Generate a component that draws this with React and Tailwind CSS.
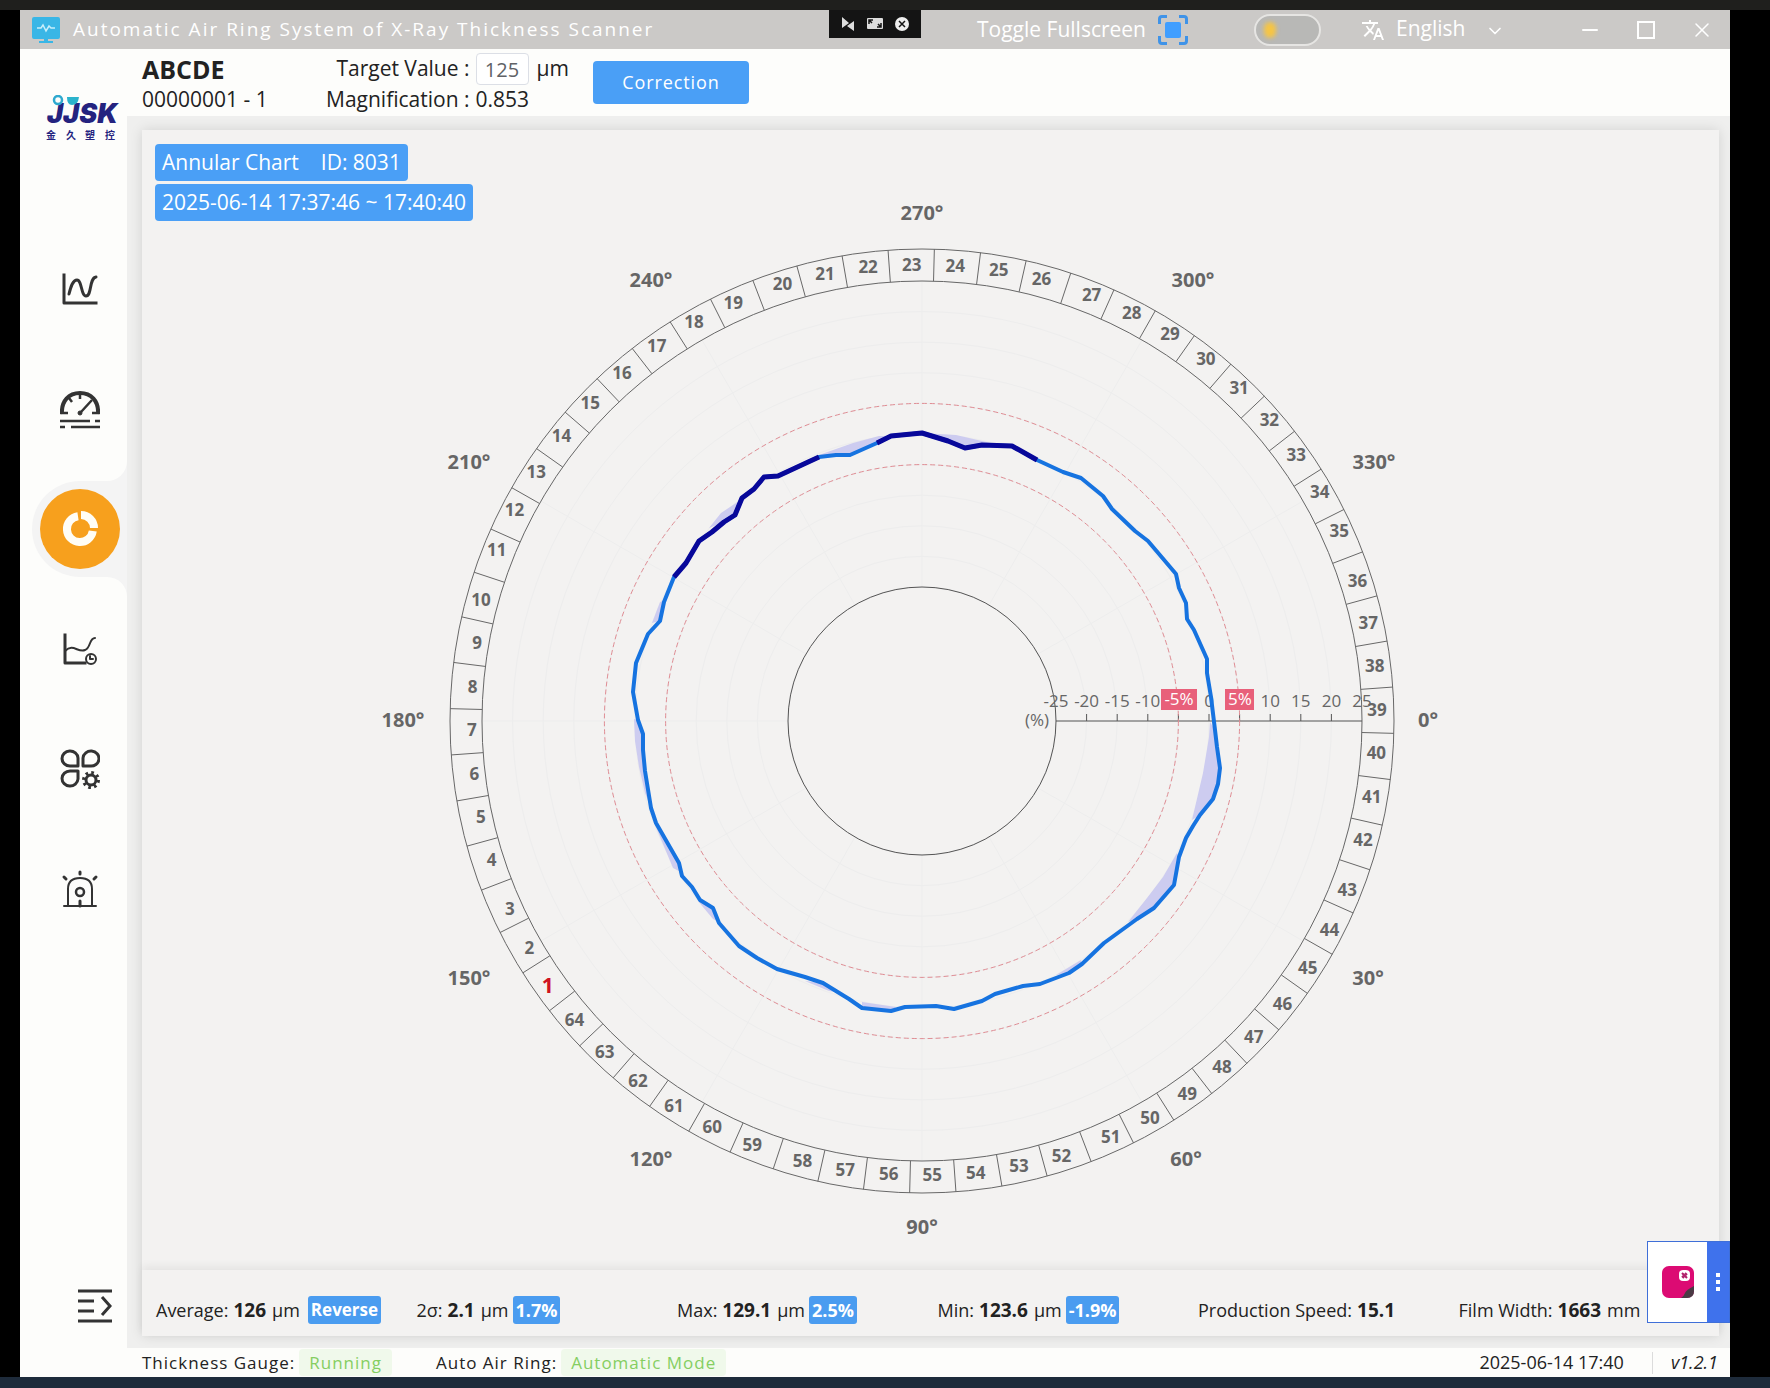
import { useState } from "react";
import { ChevronDown, Minus, Square, X } from "lucide-react";
import { MdTranslate } from "react-icons/md";

// points are relative to the chart centre, clockwise from 180°
const profile = [
  [-284, -1], [-289, -29], [-286, -58], [-274, -87], [-262, -100], [-258, -119], [-248, -144],
  [-236, -158], [-223, -180], [-210, -189], [-198, -199], [-187, -206], [-180, -223], [-168, -232],
  [-158, -244], [-144, -245], [-116, -258], [-103, -264],
  [-86, -266], [-72, -266], [-45, -278],
  [-31, -285], [0, -288], [26, -280], [43, -273], [60, -276], [90, -275], [115, -261],
  [141, -249], [159, -243], [181, -225], [190, -212], [213, -190], [226, -180], [254, -147],
  [257, -133], [264, -118], [265, -102], [272, -91], [285, -62], [285, -48], [289, -24],
  [293, 9], [295, 26], [298, 47], [296, 63], [291, 78], [278, 94], [271, 105], [264, 117],
  [257, 136], [252, 164], [232, 187], [215, 198], [182, 222], [160, 243], [147, 252], [118, 263],
  [101, 265], [73, 273], [60, 280], [32, 288], [14, 285], [-17, 286], [-31, 290], [-60, 287],
  [-73, 278], [-99, 262], [-117, 256], [-145, 248], [-165, 237], [-183, 225], [-203, 202],
  [-209, 187], [-222, 179], [-230, 166], [-240, 155], [-243, 142], [-266, 102], [-271, 87],
  [-277, 50], [-279, 29], [-279, 13],
];

// stretches of the profile where the ring is correcting
const activeRanges = [[6, 17], [20, 27]];

const deviations = [
  "288,1 287,16 281,52 270,99 278,94 291,78 296,63 298,47 295,26 293,9",
  "255,132 241,156 225,177 206,201 215,198 232,187 252,164 257,136",
  "-103,-266 -69,-278 -43,-285 -31,-285 -45,-278 -72,-266 -86,-266",
  "0,-288 34,-286 60,-280 78,-276 60,-276 43,-273 26,-280",
  "-213,-193 -201,-208 -183,-220 -187,-206 -198,-199",
  "-270,-98 -262,-119 -257,-121 -262,-100",
  "-288,-2 -287,20 -283,46 -277,72 -271,87 -277,50 -279,13 -284,-1",
  "-267,104 -249,147 -243,150 -243,142 -266,102",
  "-224,180 -209,198 -205,200 -209,187",
  "-117,260 -93,270 -80,272 -99,262",
  "-60,281 -26,286 -31,290 -60,287",
  "134,254 159,239 160,243 147,252",
  "252,-147 258,-130 259,-128 257,-140",
];

const angles = [
  { label: "0°", x: 506, y: -2 },
  { label: "30°", x: 446, y: 256 },
  { label: "60°", x: 264, y: 437 },
  { label: "90°", x: 0, y: 505 },
  { label: "120°", x: -271, y: 437 },
  { label: "150°", x: -453, y: 256 },
  { label: "180°", x: -519, y: -2 },
  { label: "210°", x: -453, y: -260 },
  { label: "240°", x: -271, y: -442 },
  { label: "270°", x: 0, y: -509 },
  { label: "300°", x: 271, y: -442 },
  { label: "330°", x: 452, y: -260 },
];

const INNER = 134;
const RING_IN = 440;
const RING_OUT = 472;
const STEP = (RING_IN - INNER) / 10;

// the zone number sits one sample further after each of these zones
const wideZones = [3, 10, 19, 26, 35, 42, 51, 58];

const polar = (deg, r) => {
  const a = (deg * Math.PI) / 180;
  return [r * Math.cos(a), r * Math.sin(a)];
};

const zoneAngle = (zone) =>
  144.67 + (zone - 1) * 5.488 + wideZones.filter((z) => z < zone).length * 1.098;

// numbers move outwards a little on the diagonals, single digits sit right of centre
const zonePosition = (zone) => {
  const deg = zoneAngle(zone);
  const r = 455 + 4 * Math.abs(Math.sin((deg * Math.PI) / 90));
  const [x, y] = polar(deg, r);
  return [zone > 1 && zone < 10 ? x + 5 : x, y];
};

const toPoints = (list) => list.map((p) => p.join(",")).join(" ");

function AnnularChart() {
  const zones = Array.from({ length: 64 }, (_, i) => i + 1);
  const ticks = Array.from({ length: 11 }, (_, i) => (i - 5) * 5);

  return (
    <svg viewBox="-780 -591 1577 1140" className="w-full h-full" role="img" aria-label="Annular chart">
      {/* Grid */}
      <g fill="none" stroke="#ededed">
        {ticks.map((t, i) => (
          <circle key={t} r={INNER + STEP * i} />
        ))}
        {angles.map((a, i) => {
          const [x1, y1] = polar(i * 30, INNER);
          const [x2, y2] = polar(i * 30, RING_IN);
          return <line key={a.label} x1={x1} y1={y1} x2={x2} y2={y2} />;
        })}
      </g>

      {/* Ring */}
      <g fill="none" stroke="#686868">
        <circle r={INNER} stroke="#555555" />
        <circle r={RING_IN} />
        <circle r={RING_OUT} />
        {zones.map((z) => {
          const [x1, y1] = polar(1.5 + z * 5.625, RING_IN);
          const [x2, y2] = polar(1.5 + z * 5.625, RING_OUT);
          return <line key={z} x1={x1} y1={y1} x2={x2} y2={y2} />;
        })}
      </g>

      {/* Zone numbers */}
      <g textAnchor="middle" className="text-[17px] font-bold fill-[#666666]">
        {zones.map((z) => {
          const [x, y] = zonePosition(z);
          return z === 1 ? (
            <text key={z} x={x} y={y + 7} className="text-[21px] fill-[#cf1322]">
              {z}
            </text>
          ) : (
            <text key={z} x={x} y={y + 5}>
              {z}
            </text>
          );
        })}
      </g>

      {/* Angles */}
      <g textAnchor="middle" className="text-[20px] font-bold fill-[#666666]">
        {angles.map((a) => (
          <text key={a.label} x={a.x} y={a.y + 8}>
            {a.label}
          </text>
        ))}
      </g>

      {/* Radial axis */}
      <g stroke="#555555">
        <line x1={INNER} y1="0" x2={RING_IN} y2="0" />
        {ticks.slice(1, 10).map((t, i) => (
          <line key={t} x1={INNER + STEP * (i + 1)} y1="0" x2={INNER + STEP * (i + 1)} y2="-7" />
        ))}
      </g>
      <g textAnchor="middle" className="text-[17px] fill-[#666666]">
        <text x="115" y="5">(%)</text>
        {ticks.map((t, i) =>
          Math.abs(t) === 5 ? null : (
            <text key={t} x={INNER + STEP * i} y="-14">
              {t}
            </text>
          )
        )}
      </g>

      {/* Limits */}
      <g fill="none" stroke="#e08d94" strokeDasharray="5 3">
        <circle r={INNER + STEP * 4} />
        <circle r={INNER + STEP * 6} />
      </g>
      <g textAnchor="middle" className="text-[17px] fill-white">
        <rect x="239" y="-32" width="36" height="21" fill="#e8607a" />
        <text x="257" y="-16">-5%</text>
        <rect x="303" y="-32" width="29" height="21" fill="#e8607a" />
        <text x="318" y="-16">5%</text>
      </g>

      {/* Thickness */}
      <g fill="#cdccf0">
        {deviations.map((d) => (
          <polygon key={d} points={d} />
        ))}
      </g>
      <polygon points={toPoints(profile)} fill="none" stroke="#1673e0" strokeWidth="4" strokeLinejoin="round" />
      {activeRanges.map(([from, to]) => (
        <polyline
          key={from}
          points={toPoints(profile.slice(from, to + 1))}
          fill="none"
          stroke="#08089a"
          strokeWidth="5"
          strokeLinejoin="round"
        />
      ))}
    </svg>
  );
}

function Logo() {
  return (
    <svg viewBox="0 0 76 48" className="w-[76px] h-12 ml-6">
      <g fill="#24237f">
        <text x="3" y="28" className="text-[27px] font-black italic font-['Inter',sans-serif]">JJSK</text>
        <text x="2 22 41 61" y="44" className="text-[10px] font-bold font-['Noto_Sans_CJK_SC',sans-serif]">金久塑控</text>
      </g>
      <circle cx="14" cy="5" r="4" fill="#fdfdfb" stroke="#2fa9cf" strokeWidth="2.5" />
      <path d="M23 2h12q-1 8-7 8-5 0-5-8z" fill="#2bb3cc" />
    </svg>
  );
}

const line = { fill: "none", stroke: "#333333", strokeWidth: 2.5, strokeLinecap: "round", strokeLinejoin: "round" };

function CurveIcon() {
  return (
    <svg viewBox="0 0 40 40" className="w-10 h-10" {...line} strokeWidth="3">
      <path d="M4 6v28h32" strokeLinecap="square" />
      <path d="M9 25c2-8 4-14 8-14 5 0 4 16 9 16 6 0 3-18 10-19" />
    </svg>
  );
}

function GaugeIcon() {
  return (
    <svg viewBox="0 0 40 40" className="w-10 h-10" {...line} strokeLinecap="butt">
      <path d="M2 25C1 12 9 4 20 4s19 8 18 21" strokeWidth="4" />
      <path d="M1 24h7M32 24h7M20 4v6M9 9l3 4M21 23 32 11" />
      <circle cx="20" cy="24" r="2" fill="#333333" strokeWidth="1" />
      <path d="M0 32h30M35 32h5M0 38h5M11 38h29" />
    </svg>
  );
}

function DonutIcon() {
  return (
    <svg viewBox="0 0 40 40" className="w-10 h-10" fill="none" stroke="#fffdf5" strokeWidth="8">
      <path d="M18 7.200A13 13 0 1 0 32.800 22" />
      <path d="M21 6A13 13 0 0 1 34 19" />
    </svg>
  );
}

function HistoryIcon() {
  return (
    <svg viewBox="0 0 40 40" className="w-10 h-10" {...line} strokeWidth="2">
      <path d="M5 6v28h20" strokeWidth="3" strokeLinecap="square" />
      <path d="M5 22c8-8 13 2 20-1 6-2 4-12 10-12" />
      <circle cx="31" cy="30" r="5" />
      <path d="M30 27v3h3" />
    </svg>
  );
}

function ModulesIcon() {
  return (
    <svg viewBox="0 0 40 40" className="w-10 h-10" {...line} strokeWidth="3">
      <path d="M18 17H10a8 7.500 0 1 1 8-8z" />
      <path d="M23 17h7a8 7.500 0 1 0-7-8z" />
      <path d="M18 22H10a8 7.500 0 1 0 8 8z" />
      <circle cx="31" cy="31" r="5" />
      <circle cx="31" cy="31" r="7" strokeWidth="4" strokeDasharray="2.500 3" strokeLinecap="butt" />
    </svg>
  );
}

function AlarmIcon() {
  return (
    <svg viewBox="0 0 40 40" className="w-10 h-10" {...line}>
      <path d="M8 37V20q0-11 12-11t12 11v17M4 37h32" strokeWidth="2" />
      <circle cx="20" cy="23" r="4" />
      <path d="M20 32v5M20 3v2M4 8l2 2M36 8l-2 2" strokeWidth="3" />
    </svg>
  );
}

const menu = [
  { name: "Curve", icon: <CurveIcon /> },
  { name: "Gauge", icon: <GaugeIcon /> },
  { name: "Annular chart", icon: <DonutIcon />, active: true },
  { name: "History", icon: <HistoryIcon /> },
  { name: "Modules", icon: <ModulesIcon /> },
  { name: "Alarms", icon: <AlarmIcon /> },
];

function Sidebar() {
  return (
    <aside className="w-[107px] shrink-0 bg-[#fdfdfb] flex flex-col">
      <div className="pt-[46px]">
        <Logo />
      </div>
      <nav className="mt-[86px] flex flex-col">
        {menu.map((item) => (
          <div key={item.name} className="h-[120px] flex flex-col justify-center">
            {item.active ? (
              <div className="relative h-24 ml-3 rounded-l-full bg-[#f4f4f4] flex items-center pl-1">
                <div className="absolute right-0 -top-5 w-5 h-5 bg-[#f4f4f4]">
                  <div className="w-full h-full bg-[#fdfdfb] rounded-br-[20px]" />
                </div>
                <div className="absolute right-0 -bottom-5 w-5 h-5 bg-[#f4f4f4]">
                  <div className="w-full h-full bg-[#fdfdfb] rounded-tr-[20px]" />
                </div>
                <button
                  aria-label={item.name}
                  className="w-20 h-20 ml-1 rounded-full bg-[#f7a01d] flex items-center justify-center"
                >
                  {item.icon}
                </button>
              </div>
            ) : (
              <button aria-label={item.name} className="w-20 h-20 ml-5 flex items-center justify-center">
                {item.icon}
              </button>
            )}
          </div>
        ))}
      </nav>
      <button aria-label="Expand menu" className="mt-auto mb-[54px] ml-[58px] w-[34px]">
        <svg viewBox="0 0 34 34" className="w-full" fill="none" stroke="#333333" strokeWidth="3">
          <path d="M0 2h34M0 12h16M0 22h16M0 32h34M24 8l8 9-8 9" />
        </svg>
      </button>
    </aside>
  );
}

function TitleBar() {
  const [dark, setDark] = useState(false);
  const [language, setLanguage] = useState("en");

  return (
    <header className="relative h-[39px] shrink-0 bg-[#cbc9c7] text-white flex items-center pl-3 pr-4">
      <svg viewBox="0 0 28 26" className="w-7 h-[26px] shrink-0">
        <path d="M2 0h24q2 0 2 2v18q0 2-2 2H2q-2 0-2-2V2q0-2 2-2zM12 22h4v2h5v2H7v-2h5z" fill="#39b6e6" />
        <path d="M5 11h4l2-3 3 6 3-5 2 2h4" fill="none" stroke="#c8eefa" strokeWidth="1.500" />
      </svg>
      <h1 className="ml-[13px] text-[19px] tracking-[2px] whitespace-nowrap">
        Automatic Air Ring System of X-Ray Thickness Scanner
      </h1>

      <div className="ml-auto flex items-center whitespace-nowrap">
        <button className="flex items-center gap-3 text-[21px]">
          Toggle Fullscreen
          <svg viewBox="0 0 30 30" className="w-[30px] h-[30px]" fill="none" stroke="#3f93e8" strokeWidth="3">
            <path d="M1.500 9V4q0-2.500 2.500-2.500h5M21 1.500h5q2.500 0 2.500 2.500v5M28.500 21v5q0 2.500-2.500 2.500h-5M9 28.500H4q-2.500 0-2.500-2.500v-5" />
            <rect x="7" y="7" width="16" height="16" rx="2" fill="#409eff" stroke="none" />
          </svg>
        </button>
        <label className="ml-[66px] w-[67px] h-8 rounded-full border-2 border-[#e6e5e3] bg-[#b8b8b6] flex items-center px-2">
          <input
            type="checkbox"
            aria-label="Dark theme"
            className="sr-only"
            checked={dark}
            onChange={(e) => setDark(e.target.checked)}
          />
          <span className="w-3 h-4 rounded-full bg-[#f6c544] blur-[2px]" />
        </label>
        <MdTranslate className="ml-10 text-[24px]" />
        <div className="relative ml-2">
          <select
            aria-label="Language"
            value={language}
            onChange={(e) => setLanguage(e.target.value)}
            className="appearance-none bg-transparent text-[21px] leading-[26px] w-[112px] pb-1 pl-[3px]"
          >
            <option value="en">English</option>
          </select>
          <ChevronDown className="absolute right-0 top-[6px] w-5 h-5 pointer-events-none" />
        </div>
        <button aria-label="Minimize" className="ml-[73px]">
          <Minus className="w-6 h-6" strokeWidth={2} />
        </button>
        <button aria-label="Maximize" className="ml-8">
          <svg viewBox="0 0 24 18" className="w-6 h-[18px]" fill="none" stroke="currentColor" strokeWidth="2">
            <rect x="4" y="1" width="16" height="16" />
          </svg>
        </button>
        <button aria-label="Close" className="ml-8">
          <X className="w-6 h-6" strokeWidth={1.5} />
        </button>
      </div>

      {/* Remote session toolbar */}
      <div className="absolute left-[809px] top-0 w-[92px] h-7 bg-[#141414] flex items-center justify-center gap-3">
        <button aria-label="Pin">
          <svg viewBox="0 0 14 14" className="w-[14px] h-[14px]" fill="#dddddd">
            <path d="M1 0l7 6-7 5zM13 4v10L6 9z" />
          </svg>
        </button>
        <button aria-label="Resize">
          <svg viewBox="0 0 16 12" className="w-4 h-3">
            <rect width="16" height="11" rx="1" fill="#dddddd" />
            <path d="M2 6V2h4M2 2l3 3M14 5v4h-4M14 9l-3-3" stroke="#141414" strokeWidth="1.500" fill="none" />
          </svg>
        </button>
        <button aria-label="End session">
          <svg viewBox="0 0 14 14" className="w-[14px] h-[14px]">
            <circle cx="7" cy="7" r="7" fill="#eeeeee" />
            <path d="M4 4l6 6M10 4l-6 6" stroke="#141414" strokeWidth="1.500" />
          </svg>
        </button>
      </div>
    </header>
  );
}

function Stat({ label, value, unit, badge, action }) {
  return (
    <div className="flex items-center whitespace-nowrap">
      <span>{label}:</span>
      <span className="ml-[5px] text-[19px] font-bold">{value}</span>
      {unit && <span className="ml-[6px]">{unit}</span>}
      {badge && (
        <span className="ml-1 px-[3px] rounded-[3px] bg-[#4a9cf0] text-white font-bold leading-7">{badge}</span>
      )}
      {action && (
        <button className="ml-2 px-[3px] rounded-[3px] bg-[#4a9cf0] text-white text-[17px] font-bold leading-7">
          {action}
        </button>
      )}
    </div>
  );
}

export default function App() {
  const [target, setTarget] = useState("125");

  return (
    <div className="min-h-screen bg-black flex flex-col font-['Open_Sans','Noto_Sans',sans-serif] text-[#222222]">
      <div className="h-[10px] bg-[#1f1f1d]" />

      <div className="relative flex-1 flex flex-col ml-5 mr-10 bg-[#efefee]">
        <TitleBar />

        <div className="flex-1 flex">
          <Sidebar />

          <div className="flex-1 flex flex-col min-w-0">
            {/* Header */}
            <div className="h-[67px] bg-[#fdfdfb] flex items-start pl-[15px]">
              <div className="w-[184px] pt-1">
                <p className="text-[25px] leading-8 font-bold">ABCDE</p>
                <p className="text-[21px] leading-7">00000001 - 1</p>
              </div>
              <div className="pt-1 grid grid-cols-[auto_auto] gap-x-[6px] text-[21px] whitespace-nowrap">
                <label htmlFor="target" className="text-right leading-[30px]">Target Value :</label>
                <div className="flex items-center gap-2">
                  <input
                    id="target"
                    value={target}
                    onChange={(e) => setTarget(e.target.value)}
                    className="w-[53px] h-8 rounded border border-[#dcdfe6] bg-white text-center text-[20px] text-[#606266]"
                  />
                  <span>μm</span>
                </div>
                <span className="text-right leading-7">Magnification :</span>
                <span className="leading-7">0.853</span>
              </div>
              <button className="ml-6 mt-3 w-[156px] h-[43px] rounded bg-[#4a9ff6] text-white text-[18px] tracking-wider">
                Correction
              </button>
            </div>

            {/* Card */}
            <main className="flex-1 flex flex-col mt-[14px] mb-3 ml-[15px] mr-[11px] bg-[#f3f2f1] shadow-[0_0_12px_rgba(0,0,0,0.12)]">
              <div className="relative flex-1">
                <AnnularChart />
                <div className="absolute left-[13px] top-[14px] flex flex-col items-start gap-[3px] text-[21px] leading-[37px] text-white">
                  <p className="px-[7px] rounded bg-[#4a9ff6] flex gap-[22px]">
                    <span>Annular Chart</span>
                    <span>ID: 8031</span>
                  </p>
                  <p className="px-[7px] rounded bg-[#4a9ff6]">2025-06-14 17:37:46 ~ 17:40:40</p>
                </div>
              </div>
              <div className="h-[66px] pl-[14px] pt-[14px] grid grid-cols-6 items-center text-[18px] shadow-[0_-4px_8px_rgba(0,0,0,0.06)]">
                <Stat label="Average" value="126" unit="μm" action="Reverse" />
                <Stat label="2σ" value="2.1" unit="μm" badge="1.7%" />
                <Stat label="Max" value="129.1" unit="μm" badge="2.5%" />
                <Stat label="Min" value="123.6" unit="μm" badge="-1.9%" />
                <Stat label="Production Speed" value="15.1" />
                <Stat label="Film Width" value="1663" unit="mm" />
              </div>
            </main>

            {/* Status bar */}
            <footer className="h-[29px] bg-[#fdfdfb] flex items-center pl-[15px] pr-3 text-[18px] whitespace-nowrap">
              <div className="flex items-center text-[17px] tracking-[1px]">
                <span>Thickness Gauge:</span>
                <span className="ml-1 px-[10px] leading-[27px] rounded bg-[#f0f9eb] text-[#85ce61]">Running</span>
                <span className="ml-[44px]">Auto Air Ring:</span>
                <span className="ml-1 px-[10px] leading-[27px] rounded bg-[#f0f9eb] text-[#85ce61]">Automatic Mode</span>
              </div>
              <span className="ml-auto">2025-06-14 17:40</span>
              <span className="ml-7 mr-[18px] w-px h-[22px] bg-[#dcdcdc]" />
              <span className="italic">v1.2.1</span>
            </footer>
          </div>
        </div>

        {/* Floating assistant */}
        <div className="absolute right-0 bottom-[54px] w-[83px] h-[82px] border border-[#3f6fd8] bg-white flex">
          <button aria-label="Assistant" className="flex-1 flex items-center justify-center">
            <svg viewBox="0 0 32 32" className="w-8 h-8">
              <rect width="32" height="32" rx="7" fill="#dc0b73" />
              <path d="M32 20v5q0 7-7 7h-6q3-2 4-5t9-7z" fill="#4a3a44" />
              <rect x="17" y="4" width="11" height="11" rx="4" fill="#ffffff" />
              <path d="M20 7l5 5M20 10l2 2M23 7l2 2" stroke="#b0206a" strokeWidth="2" />
            </svg>
          </button>
          <button
            aria-label="More"
            className="w-[22px] bg-[#3f72ec] flex flex-col items-center justify-center gap-[3px]"
          >
            <span className="w-1 h-1 bg-white" />
            <span className="w-1 h-1 bg-white" />
            <span className="w-1 h-1 bg-white" />
          </button>
        </div>
      </div>

      <div className="h-[11px] bg-[#1e2b3b]" />
    </div>
  );
}
